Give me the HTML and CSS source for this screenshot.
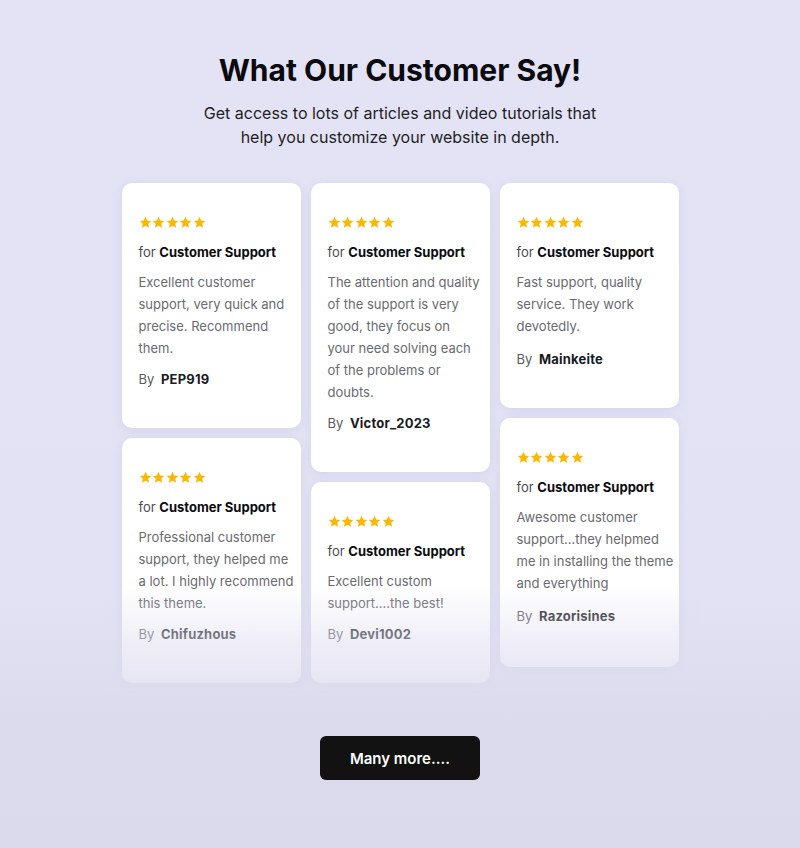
FILE: index.html
```html
<!DOCTYPE html>
<html lang="en">
<head>
<meta charset="utf-8">
<title>What Our Customer Say!</title>
<link rel="stylesheet" href="styles.css">
</head>
<body>
<svg width="0" height="0" class="defs">
  <defs>
    <symbol id="star" viewBox="0 0 24 24"><path d="M12 1.6l3.15 6.7 7.3.95-5.35 5.05 1.4 7.2L12 18l-6.5 3.5 1.4-7.2-5.35-5.05 7.3-.95z" fill="#f8b805"/></symbol>
  </defs>
</svg>
<section class="testimonials">
  <h1 class="title">What Our Customer Say!</h1>
  <p class="subtitle">Get access to lots of articles and video tutorials that<br>help you customize your website in depth.</p>

  <div class="grid">
    <div class="col">
      <div class="card">
        <div class="stars"><svg><use href="#star"/></svg><svg><use href="#star"/></svg><svg><use href="#star"/></svg><svg><use href="#star"/></svg><svg><use href="#star"/></svg></div>
        <p class="for">for <b>Customer Support</b></p>
        <p class="text">Excellent customer support, very quick and precise. Recommend them.</p>
        <p class="by">By <span class="name">PEP919</span></p>
      </div>
      <div class="card">
        <div class="stars"><svg><use href="#star"/></svg><svg><use href="#star"/></svg><svg><use href="#star"/></svg><svg><use href="#star"/></svg><svg><use href="#star"/></svg></div>
        <p class="for">for <b>Customer Support</b></p>
        <p class="text">Professional customer support, they helped me a lot. I highly recommend this theme.</p>
        <p class="by">By <span class="name">Chifuzhous</span></p>
      </div>
    </div>
    <div class="col">
      <div class="card">
        <div class="stars"><svg><use href="#star"/></svg><svg><use href="#star"/></svg><svg><use href="#star"/></svg><svg><use href="#star"/></svg><svg><use href="#star"/></svg></div>
        <p class="for">for <b>Customer Support</b></p>
        <p class="text">The attention and quality of the support is very good, they focus on<br>your need solving each<br>of the problems or doubts.</p>
        <p class="by">By <span class="name">Victor_2023</span></p>
      </div>
      <div class="card">
        <div class="stars"><svg><use href="#star"/></svg><svg><use href="#star"/></svg><svg><use href="#star"/></svg><svg><use href="#star"/></svg><svg><use href="#star"/></svg></div>
        <p class="for">for <b>Customer Support</b></p>
        <p class="text">Excellent custom support....the best!</p>
        <p class="by">By <span class="name">Devi1002</span></p>
      </div>
    </div>
    <div class="col col--loose">
      <div class="card">
        <div class="stars"><svg><use href="#star"/></svg><svg><use href="#star"/></svg><svg><use href="#star"/></svg><svg><use href="#star"/></svg><svg><use href="#star"/></svg></div>
        <p class="for">for <b>Customer Support</b></p>
        <p class="text">Fast support, quality service. They work devotedly.</p>
        <p class="by">By <span class="name">Mainkeite</span></p>
      </div>
      <div class="card">
        <div class="stars"><svg><use href="#star"/></svg><svg><use href="#star"/></svg><svg><use href="#star"/></svg><svg><use href="#star"/></svg><svg><use href="#star"/></svg></div>
        <p class="for">for <b>Customer Support</b></p>
        <p class="text">Awesome customer support...they helpmed me in installing the theme and everything</p>
        <p class="by">By <span class="name">Razorisines</span></p>
      </div>
    </div>
    <div class="fade"></div>
  </div>

  <div class="actions">
    <button class="more" type="button">Many more....</button>
  </div>
</section>
</body>
</html>
```

FILE: styles.css
```css
html, body {
  margin: 0;
  padding: 0;
}
body {
  min-height: 848px;
  background: linear-gradient(180deg, #e4e3f5 0%, #e3e2f4 70%, #dcdbed 85%, #dbdaec 100%);
  font-family: Inter, "Noto Sans", "Liberation Sans", sans-serif;
  color: #111;
}
.defs {
  position: absolute;
}
.testimonials {
  display: flex;
  flex-direction: column;
  align-items: center;
  padding-top: 52px;
}
.title {
  margin: 0;
  font-size: 30px;
  line-height: 36px;
  font-weight: 700;
  color: #0b0b0f;
}
.subtitle {
  margin: 13px 0 0;
  font-size: 16px;
  line-height: 24px;
  color: #1e1e24;
  text-align: center;
}
.grid {
  position: relative;
  margin-top: 34px;
  display: flex;
  gap: 10px;
  align-items: flex-start;
}
.col {
  width: 179px;
  display: flex;
  flex-direction: column;
  gap: 10px;
}
.card {
  background: #fff;
  border-radius: 10px;
  padding: 32px 4px 38px 17px;
  box-shadow: 0 2px 10px rgba(110, 108, 170, 0.12);
}
.stars {
  display: flex;
  gap: 0.5px;
  height: 14px;
  align-items: center;
}
.stars svg {
  width: 13px;
  height: 13px;
}
.for {
  margin: 12px 0 0;
  font-size: 13px;
  line-height: 22px;
  color: #4a4a4f;
}
.for b {
  font-weight: 700;
  color: #0b0b0f;
}
.text {
  margin: 8px 0 0;
  font-size: 13px;
  line-height: 22px;
  color: #6a6a70;
}
.by {
  margin: 9px 0 0;
  font-size: 13px;
  line-height: 22px;
  color: #5a5a60;
}
.col--loose .by {
  margin-top: 11px;
}
.col--loose .card + .card {
  padding-bottom: 40px;
}
.name {
  margin-left: 3px;
  font-weight: 700;
  color: #1a1a1f;
  letter-spacing: 0.2px;
}
.fade {
  position: absolute;
  left: -20px;
  right: -20px;
  bottom: -8px;
  height: 105px;
  background: linear-gradient(180deg, rgba(227, 226, 244, 0) 0%, rgba(224, 223, 241, 0.55) 55%, rgba(222, 221, 239, 0.8) 100%);
  pointer-events: none;
}
.actions {
  margin-top: 53px;
}
.more {
  width: 160px;
  height: 44px;
  border: 0;
  border-radius: 6px;
  background: #121212;
  color: #fff;
  font-family: Inter, "Noto Sans", "Liberation Sans", sans-serif;
  font-size: 15px;
  font-weight: 600;
  cursor: pointer;
}
```
